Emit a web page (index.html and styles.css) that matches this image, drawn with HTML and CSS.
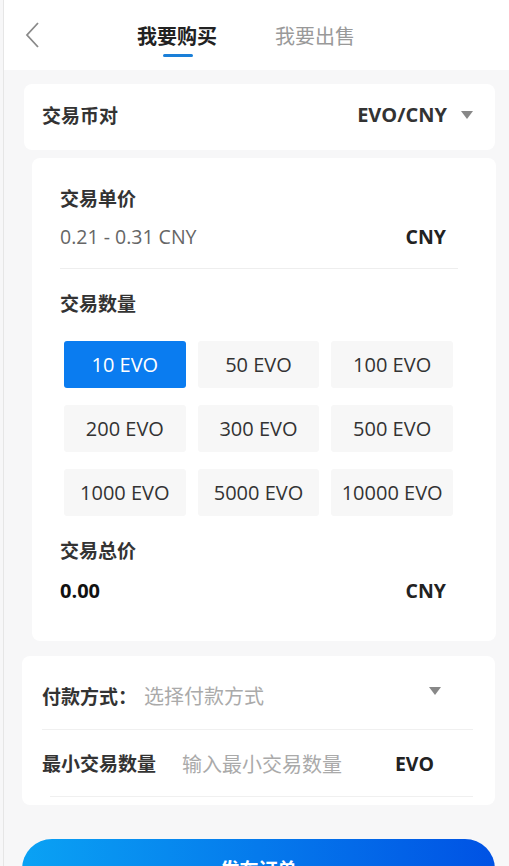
FILE: index.html
```html
<!DOCTYPE html>
<html lang="zh-CN">
<head>
<meta charset="UTF-8">
<meta name="viewport" content="width=device-width, initial-scale=1.0">
<title>我要购买</title>
<link rel="stylesheet" href="styles.css">
</head>
<body>
<div class="page">
    <div class="header">
        <a class="back" href="#">
            <svg width="16" height="28" viewBox="0 0 16 28"><path d="M14 2 L3 14 L14 26" fill="none" stroke="#8a8a8a" stroke-width="1.8"/></svg>
        </a>
        <div class="tabs">
            <div class="tab active">我要购买</div>
            <div class="tab">我要出售</div>
        </div>
    </div>

    <div class="card pair">
        <span class="label">交易币对</span>
        <span class="pair-value">EVO/CNY <i class="caret"></i></span>
    </div>

    <div class="card trade">
        <div class="label">交易单价</div>
        <div class="row price">
            <span class="range">0.21 - 0.31 CNY</span>
            <span class="unit">CNY</span>
        </div>
        <div class="label qty-label">交易数量</div>
        <div class="amounts">
            <button class="amount selected">10 EVO</button>
            <button class="amount">50 EVO</button>
            <button class="amount">100 EVO</button>
            <button class="amount">200 EVO</button>
            <button class="amount">300 EVO</button>
            <button class="amount">500 EVO</button>
            <button class="amount">1000 EVO</button>
            <button class="amount">5000 EVO</button>
            <button class="amount">10000 EVO</button>
        </div>
        <div class="label total-label">交易总价</div>
        <div class="row total">
            <span class="total-value">0.00</span>
            <span class="unit">CNY</span>
        </div>
    </div>

    <div class="card form">
        <div class="form-row pay">
            <span class="label">付款方式：</span>
            <span class="placeholder">选择付款方式</span>
            <i class="caret"></i>
        </div>
        <div class="form-row min">
            <span class="label">最小交易数量</span>
            <span class="placeholder">输入最小交易数量</span>
            <span class="unit">EVO</span>
        </div>
    </div>

    <button class="submit">发布订单</button>
</div>
</body>
</html>
```

FILE: styles.css
```css
body {
    margin: 0;
    padding: 0 0 0 3px;
    background: #f7f7f8;
    font-family: "Open Sans", "Noto Sans CJK SC", sans-serif;
    color: #333;
}
.page {
    border-left: 1px solid #e6e6e6;
    min-height: 866px;
    overflow: hidden;
}
.header {
    background: #fff;
    height: 70px;
    display: flex;
    align-items: flex-start;
    padding-left: 20px;
}
.back {
    display: block;
    margin-top: 21px;
    width: 16px;
}
.tabs {
    display: flex;
    gap: 58px;
    margin-left: 97px;
}
.tab {
    font-size: 20px;
    color: #999;
    line-height: 28px;
    margin-top: 23px;
    position: relative;
}
.tab.active {
    color: #222;
    font-weight: bold;
}
.tab.active::after {
    content: "";
    position: absolute;
    left: 26px;
    top: 31px;
    width: 30px;
    height: 3px;
    border-radius: 2px;
    background: #1a7fd8;
}
.card {
    background: #fff;
    border-radius: 8px;
}
.label {
    font-size: 19px;
    font-weight: bold;
    color: #333;
}
.caret {
    display: inline-block;
    width: 0;
    height: 0;
    border-left: 6px solid transparent;
    border-right: 6px solid transparent;
    border-top: 8px solid #888;
}
.pair {
    margin: 14px 14px 0 20px;
    height: 61px;
    display: flex;
    align-items: center;
    justify-content: space-between;
    padding: 0 22px 5px 18px;
}
.pair-value {
    font-size: 20px;
    font-weight: bold;
    display: flex;
    align-items: center;
    gap: 14px;
}
.trade {
    margin: 8px 13px 0 28px;
    padding: 26px 38px 37px 28px;
}
.row {
    display: flex;
    justify-content: space-between;
    align-items: center;
    padding-right: 12px;
}
.unit {
    font-size: 19.5px;
    font-weight: bold;
    color: #222;
}
.price {
    height: 36px;
    margin-top: 6px;
    padding-bottom: 14px;
    border-bottom: 1px solid #eeeeee;
}
.range {
    font-size: 19.5px;
    color: #666;
}
.qty-label {
    margin-top: 20px;
}
.amounts {
    display: grid;
    grid-template-columns: repeat(3, 1fr);
    column-gap: 12px;
    row-gap: 17px;
    margin: 24px 5px 0 4px;
}
.amount {
    height: 47px;
    border: none;
    border-radius: 3px;
    background: #f7f7f7;
    font-family: inherit;
    font-size: 20px;
    color: #333;
    padding: 0;
}
.amount.selected {
    background: #0a7cf0;
    color: #fff;
}
.total-label {
    margin-top: 20px;
}
.total {
    margin-top: 13px;
}
.total-value {
    font-size: 20px;
    font-weight: bold;
    color: #111;
}
.form {
    margin: 15px 14px 0 18px;
    padding: 0 22px 8px 20px;
}
.form-row {
    display: flex;
    align-items: center;
    border-bottom: 1px solid #f0f0f0;
}
.pay {
    height: 67px;
    padding-top: 6px;
}
.pay .placeholder {
    margin-left: 7px;
    flex: 1;
}
.pay .caret {
    margin: 0 32px 10px 0;
}
.placeholder {
    font-size: 20px;
    color: #aaa;
}
.min {
    height: 66px;
    margin-left: 8px;
}
.min .label {
    margin-left: -8px;
}
.min .placeholder {
    margin-left: 26px;
    flex: 1;
}
.min .unit {
    margin-right: 39px;
}
.submit {
    display: block;
    margin: 34px 14px 0 18px;
    width: 473px;
    height: 60px;
    border: none;
    border-radius: 30px;
    background: linear-gradient(90deg, #0aa2f4, #0052e4);
    color: #fff;
    font-family: inherit;
    font-size: 19px;
    font-weight: bold;
}
```
